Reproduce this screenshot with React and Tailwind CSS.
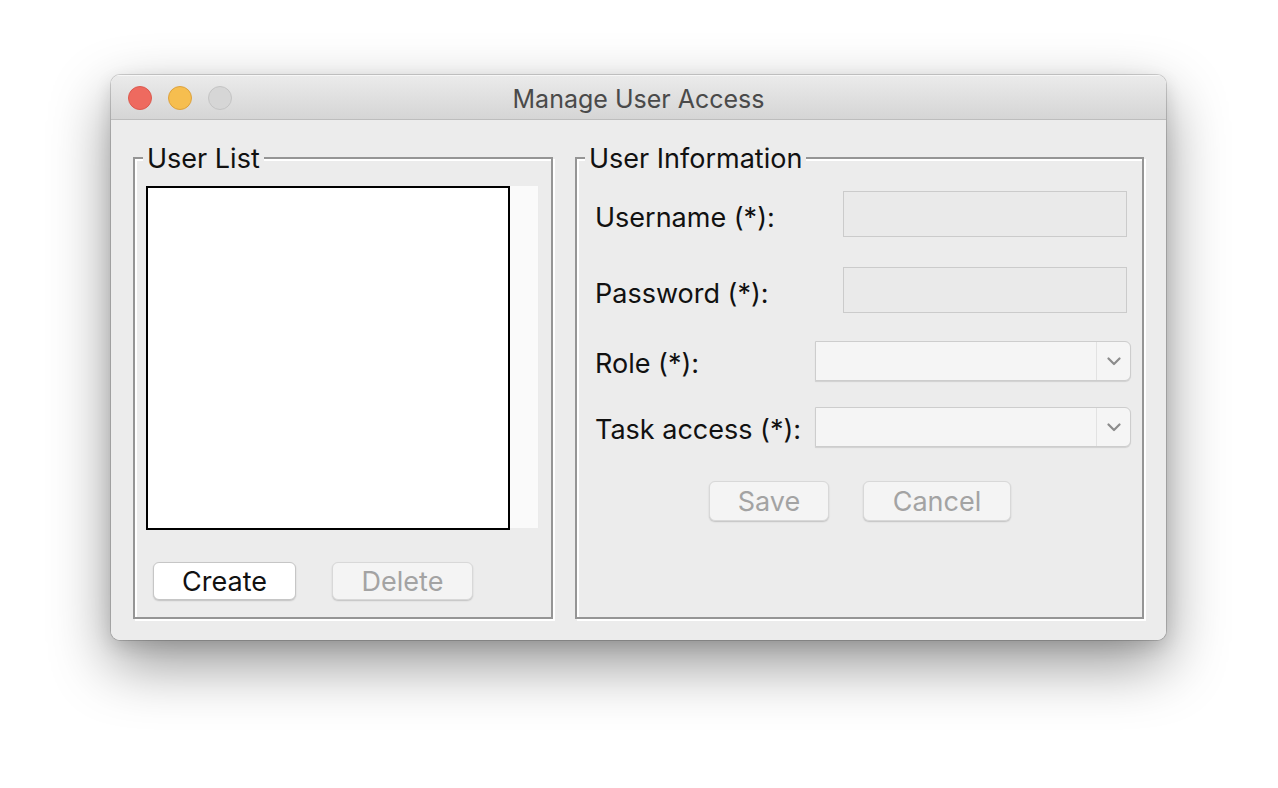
import React from "react";

const font = { fontFamily: "Inter, 'Noto Sans', sans-serif" };

function Group({ title, className, children }) {
  return (
    <div
      className={`relative border-2 border-[#959595] shadow-[inset_2px_2px_0_0_#ffffff,2px_2px_0_0_#ffffff] ${className}`}
    >
      <div className="absolute top-[-16px] left-[8px] bg-[#ececec] px-[4px] text-[27px] leading-[32px] text-[#111]">
        {title}
      </div>
      {children}
    </div>
  );
}

function Chevron() {
  return (
    <svg width="14" height="9" viewBox="0 0 14 9" fill="none">
      <path d="M1.5 1.5 L7 7 L12.5 1.5" stroke="#8c8c8c" strokeWidth="2.2" strokeLinecap="round" strokeLinejoin="round" />
    </svg>
  );
}

function Combo() {
  return (
    <div className="flex h-[40px] w-[316px] rounded-r-[6px] border border-[#cdcdcd] bg-[#f5f5f5] shadow-[0_1px_1px_rgba(0,0,0,0.12)]">
      <div className="flex-1" />
      <div className="flex w-[34px] items-center justify-center border-l border-[#e2e2e2]">
        <Chevron />
      </div>
    </div>
  );
}

function TextField() {
  return <div className="h-[46px] w-[284px] border border-[#cbcbcb] bg-[#eaeaea]" />;
}

function Btn({ children, enabled, w }) {
  return (
    <div
      className={`flex h-[38px] items-center justify-center rounded-[6px] border text-[27px] leading-none shadow-[0_1px_1.5px_rgba(0,0,0,0.18)] ${
        enabled ? "border-[#c6c6c6] bg-white text-[#111]" : "border-[#d8d8d8] bg-[#f4f4f4] text-[#a3a3a3]"
      } ${w}`}
    >
      {children}
    </div>
  );
}

export default function App() {
  return (
    <div className="h-[788px] w-[1278px] bg-white pl-[111px] pt-[75px]" style={font}>
      <div className="flex h-[565px] w-[1055px] flex-col overflow-hidden rounded-[9px] shadow-[0_0_0_1px_rgba(0,0,0,0.16),0_24px_60px_rgba(0,0,0,0.42),0_6px_18px_rgba(0,0,0,0.12)]">
        {/* Title bar */}
        <div className="relative flex h-[45px] shrink-0 items-center border-b border-[#bdbdbd] bg-gradient-to-b from-[#ebebeb] to-[#d5d5d5] shadow-[inset_0_1px_0_#f7f7f7]">
          <div className="absolute left-[17px] top-[11px] flex gap-[16px]">
            <div className="h-[24px] w-[24px] rounded-full border border-[#dc5a4f] bg-[#ee6a5f]" />
            <div className="h-[24px] w-[24px] rounded-full border border-[#dda23e] bg-[#f6be4f]" />
            <div className="h-[24px] w-[24px] rounded-full border border-[#c4c4c4] bg-[#d6d6d6]" />
          </div>
          <div className="w-full pt-[4px] text-center text-[25px] leading-none text-[#4a4a4a]">Manage User Access</div>
        </div>
        {/* Body */}
        <div className="flex flex-1 bg-[#ececec] pl-[22px] pt-[37px]">
          <Group title="User List" className="h-[462px] w-[420px]">
            <div className="ml-[11px] mt-[27px] flex h-[344px] w-[393px]">
              <div className="h-[344px] w-[364px] border-2 border-black bg-white" />
              <div className="h-[342px] w-[29px] border-r border-[#ebebeb] bg-[#fafafa]" />
            </div>
            <div className="ml-[18px] mt-[32px] flex gap-[36px]">
              <Btn enabled w="w-[143px]">Create</Btn>
              <Btn w="w-[141px]">Delete</Btn>
            </div>
          </Group>
          <Group title="User Information" className="ml-[22px] h-[462px] w-[569px]">
            <div className="flex flex-col pl-[18px] pt-[32px]">
              <div className="flex h-[46px] items-center">
                <div className="w-[248px] pt-[8px] text-[27px] text-[#111]">Username (*):</div>
                <TextField />
              </div>
              <div className="mt-[30px] flex h-[46px] items-center">
                <div className="w-[248px] pt-[8px] text-[27px] text-[#111]">Password (*):</div>
                <TextField />
              </div>
              <div className="mt-[28px] flex h-[40px] items-center">
                <div className="w-[220px] pt-[6px] text-[27px] text-[#111]">Role (*):</div>
                <Combo />
              </div>
              <div className="mt-[26px] flex h-[40px] items-center">
                <div className="w-[220px] pt-[6px] text-[27px] text-[#111]">Task access (*):</div>
                <Combo />
              </div>
              <div className="mt-[34px] flex gap-[34px] pl-[114px]">
                <Btn w="w-[120px] h-[40px]">Save</Btn>
                <Btn w="w-[148px] h-[40px]">Cancel</Btn>
              </div>
            </div>
          </Group>
        </div>
      </div>
    </div>
  );
}
